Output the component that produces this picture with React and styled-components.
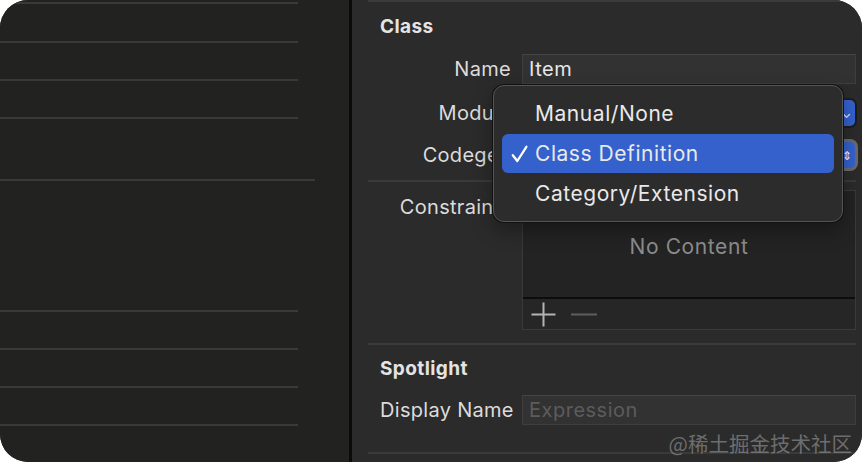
import React from "react";
import styled, { createGlobalStyle } from "styled-components";

const Global = createGlobalStyle`
  html, body { margin: 0; padding: 0; background: #ffffff; }
  body { font-family: Inter, "Noto Sans", "Liberation Sans", sans-serif; -webkit-font-smoothing: antialiased; }
`;

const Frame = styled.div`
  width: 862px;
  height: 462px;
  border-radius: 28px;
  overflow: hidden;
  display: grid;
  grid-template-columns: 349px 3px 1fr;
  background: #2a2a2a;
  position: relative;
`;

const LeftPane = styled.div`
  background: #222220;
  display: flex;
  flex-direction: column;
`;

const ListRow = styled.div`
  height: ${(p) => p.$h}px;
  width: ${(p) => p.$w}px;
  border-bottom: 2px solid #393938;
  flex: none;
`;

const Divider = styled.div`
  background: #0b0b0b;
`;

const RightPane = styled.div`
  position: relative;
  background: #2b2b2b;
  padding: 0 6px 0 16px;
  display: flex;
  flex-direction: column;
`;

const Section = styled.section`
  border-top: 2px solid #3a3a3a;
  display: flex;
  flex-direction: column;
  padding-bottom: ${(p) => p.$pb || 0}px;
`;

const SectionTitle = styled.h3`
  margin: ${(p) => p.$mt}px 0 0 12px;
  font-size: 19px;
  line-height: 26px;
  letter-spacing: 0.4px;
  font-weight: 700;
  color: #e4e4e4;
`;

const FormRow = styled.div`
  display: grid;
  grid-template-columns: 143px 334px;
  column-gap: 11px;
  align-items: ${(p) => (p.$top ? "start" : "center")};
  margin-top: ${(p) => p.$mt}px;
`;

const Label = styled.div`
  text-align: ${(p) => (p.$left ? "left" : "right")};
  padding-left: ${(p) => (p.$left ? 12 : 0)}px;
  font-size: 20px;
  line-height: 30px;
  letter-spacing: 0.3px;
  color: #dcdcdc;
  white-space: nowrap;
  margin-top: ${(p) => p.$mt || 0}px;
`;

const TextField = styled.div`
  height: 30px;
  box-sizing: border-box;
  background: #323232;
  border: 1px solid #3e3e3e;
  border-top-color: #454545;
  padding-left: 6px;
  font-size: 20px;
  line-height: 29px;
  letter-spacing: 0.5px;
  color: ${(p) => (p.$placeholder ? "#5c5c5c" : "#e8e8e8")};
`;

const PopupButton = styled.div`
  height: 30px;
  box-sizing: border-box;
  background: #3a3a3a;
  border-radius: 6px;
  display: flex;
  justify-content: flex-end;
  align-items: center;
  padding-right: 1px;
`;

const Stepper = styled.div`
  width: 17px;
  height: 26px;
  border-radius: 5px;
  background: #3462d0;
  box-shadow: ${(p) => (p.$focus ? "0 0 0 3px #6b6b6b" : "0 0 0 2px #1c1c1c")};
  color: #fff;
  font-size: 12px;
  display: flex;
  align-items: center;
  justify-content: center;
`;

const ListBox = styled.div`
  height: 140px;
  box-sizing: border-box;
  border: 1px solid #3a3a3a;
  background: #232323;
  display: flex;
  flex-direction: column;
`;

const ListBody = styled.div`
  flex: 1;
  display: flex;
  justify-content: center;
  padding-top: 42px;
  font-size: 21px;
  line-height: 28px;
  letter-spacing: 0.6px;
  color: #8c8c8c;
`;

const ListToolbar = styled.div`
  height: 30px;
  flex: none;
  border-top: 2px solid #0d0d0d;
  background: #262626;
  display: flex;
  align-items: center;
  gap: 13px;
  padding-left: 7px;
`;

const ToolIcon = styled.svg`
  width: 27px;
  height: 27px;
  display: block;
`;

const Menu = styled.div`
  position: absolute;
  left: 141px;
  top: 85px;
  width: 350px;
  height: 137px;
  box-sizing: border-box;
  border-radius: 11px;
  background: #2c2c2c;
  border: 1px solid #555555;
  box-shadow: 0 0 0 1px #121212, 0 8px 20px rgba(0, 0, 0, 0.35);
  padding: 8px 8px;
  display: flex;
  flex-direction: column;
`;

const MenuItem = styled.div`
  height: 40px;
  border-radius: 6px;
  background: ${(p) => (p.$active ? "#3461cc" : "transparent")};
  display: flex;
  align-items: center;
  position: relative;
  padding-left: 33px;
  font-size: 21px;
  letter-spacing: 0.55px;
  color: #e9e9e9;
  white-space: nowrap;
`;

const Check = styled.svg`
  position: absolute;
  left: 9px;
  top: 11px;
  width: 17px;
  height: 18px;
`;

const Watermark = styled.div`
  position: absolute;
  right: 10px;
  bottom: 6px;
  font-family: "Noto Sans CJK SC", sans-serif;
  font-size: 20.5px;
  line-height: 26px;
  color: rgba(140, 140, 140, 0.7);
  white-space: nowrap;
`;

const leftRows = [
  { h: 2, w: 298 },
  { h: 37, w: 298 },
  { h: 36, w: 298 },
  { h: 36, w: 298 },
  { h: 60, w: 315 },
  { h: 129, w: 298 },
  { h: 36, w: 298 },
  { h: 36, w: 298 },
  { h: 36, w: 298 },
];

export default function App() {
  return (
    <>
      <Global />
      <Frame>
        <LeftPane>
          {leftRows.map((r, i) => (
            <ListRow key={i} $h={r.h} $w={r.w} />
          ))}
        </LeftPane>
        <Divider />
        <RightPane>
          <Section $pb={10}>
            <SectionTitle $mt={12}>Class</SectionTitle>
            <FormRow $mt={14}>
              <Label>Name</Label>
              <TextField>Item</TextField>
            </FormRow>
            <FormRow $mt={14}>
              <Label>Module</Label>
              <PopupButton>
                <Stepper>⌄</Stepper>
              </PopupButton>
            </FormRow>
            <FormRow $mt={12}>
              <Label>Codegen</Label>
              <PopupButton>
                <Stepper $focus>⇕</Stepper>
              </PopupButton>
            </FormRow>
          </Section>
          <Section $pb={13}>
            <FormRow $mt={8} $top>
              <Label $mt={2}>Constraints</Label>
              <ListBox>
                <ListBody>No Content</ListBody>
                <ListToolbar>
                  <ToolIcon viewBox="0 0 27 27">
                    <path d="M13.5 1.5v24M1.5 13.5h24" stroke="#b4b4b4" strokeWidth="2" fill="none" />
                  </ToolIcon>
                  <ToolIcon viewBox="0 0 27 27">
                    <path d="M1 13.5h26" stroke="#5e5e5e" strokeWidth="2" fill="none" />
                  </ToolIcon>
                </ListToolbar>
              </ListBox>
            </FormRow>
          </Section>
          <Section $pb={27}>
            <SectionTitle $mt={11}>Spotlight</SectionTitle>
            <FormRow $mt={13}>
              <Label $left>Display Name</Label>
              <TextField $placeholder>Expression</TextField>
            </FormRow>
          </Section>
          <Section />
          <Menu>
            <MenuItem>Manual/None</MenuItem>
            <MenuItem $active>
              <Check viewBox="0 0 17 18">
                <path d="M1.8 10.2 L6.3 16 L15.4 1.8" stroke="#ffffff" strokeWidth="2.3" fill="none" strokeLinecap="round" strokeLinejoin="round" />
              </Check>
              Class Definition
            </MenuItem>
            <MenuItem>Category/Extension</MenuItem>
          </Menu>
        </RightPane>
        <Watermark>@稀土掘金技术社区</Watermark>
      </Frame>
    </>
  );
}
